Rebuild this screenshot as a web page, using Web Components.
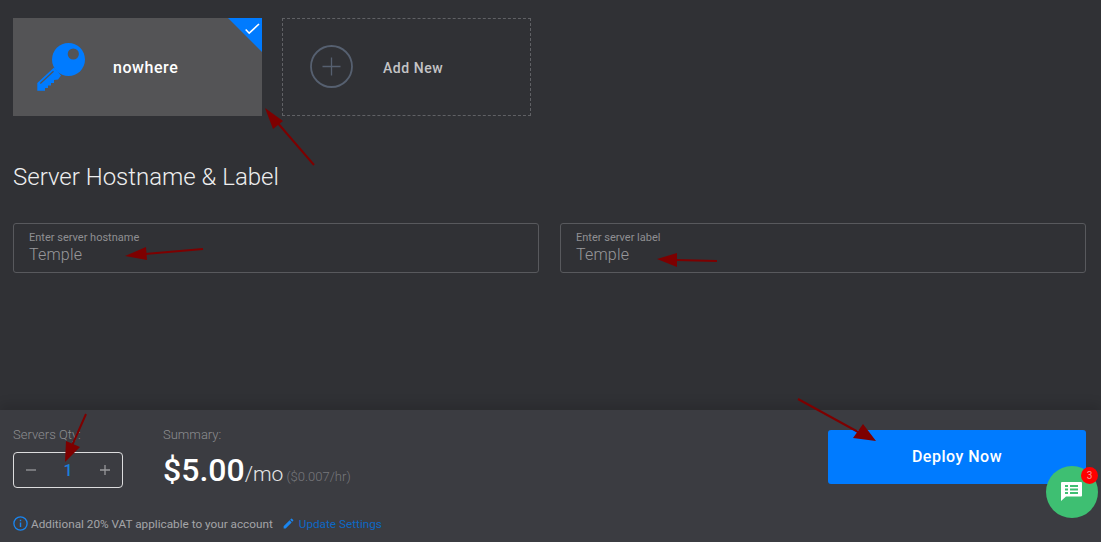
<!DOCTYPE html>
<html>
<head>
<meta charset="utf-8">
<title>Deploy</title>
<style>
  html, body { margin: 0; height: 100%; overflow: hidden; }
  body { font-family: Roboto, "Liberation Sans", sans-serif; background: #303135; }
</style>
</head>
<body>
<deploy-page></deploy-page>

<script>
class KeyCard extends HTMLElement {
  constructor() {
    super();
    this.attachShadow({ mode: 'open' });
    this.shadowRoot.innerHTML = `
    <style>
      :host { display: flex; align-items: center; width: 249px; height: 98px; background: #545456; position: relative; flex-shrink: 0; }
      svg.key { margin-left: 23px; width: 50px; height: 50px; flex-shrink: 0; }
      span { margin-left: 27px; font-size: 16px; font-weight: 500; letter-spacing: .55px; color: #fff; margin-top: 1px; }
      svg.corner { position: absolute; top: 0; right: 0; width: 34px; height: 34px; }
    </style>
    <svg class="key" viewBox="0 0 50 50">
      <circle cx="32.500" cy="17.500" r="16.500" fill="#007bff"/>
      <path fill="#007bff" d="M18 25.500L1.300 41v7.700H9V46h3v-2.500h3V41h3v-3l4-.5 3-4z"/>
      <path fill="none" stroke="#545456" stroke-width="1.300" d="M4.300 41.500L17.500 29.300"/>
      <circle cx="37.300" cy="12" r="5.600" fill="#545456"/>
    </svg>
    <span><slot></slot></span>
    <svg class="corner" viewBox="0 0 34 34">
      <path fill="#007bff" d="M0 0h34v34z"/>
      <path fill="none" stroke="#fff" stroke-width="1.600" d="M17.700 11.500l3.500 3.700 9.800-9.200"/>
    </svg>`;
  }
}
customElements.define('key-card', KeyCard);

class AddCard extends HTMLElement {
  constructor() {
    super();
    this.attachShadow({ mode: 'open' });
    this.shadowRoot.innerHTML = `
    <style>
      :host { display: flex; align-items: center; box-sizing: border-box; width: 249px; height: 98px; border: 1px dashed #606165; flex-shrink: 0; }
      svg { margin-left: 27px; width: 43px; height: 43px; flex-shrink: 0; margin-top: -1px; }
      span { margin-left: 30px; font-size: 14px; font-weight: 500; letter-spacing: .55px; color: #c4c4c6; margin-top: 1px; }
    </style>
    <svg viewBox="0 0 43 43" fill="none" stroke="#566070">
      <circle cx="21.500" cy="21.500" r="20.500" stroke-width="1.800"/>
      <path stroke-width="1.300" d="M12.500 21.500h18M21.500 12.500v18"/>
    </svg>
    <span><slot></slot></span>`;
  }
}
customElements.define('add-card', AddCard);

class TextField extends HTMLElement {
  constructor() {
    super();
    this.attachShadow({ mode: 'open' });
    this.shadowRoot.innerHTML = `
    <style>
      :host { display: flex; flex-direction: column; box-sizing: border-box; flex: 1; height: 50px; border: 1px solid #58595d; border-radius: 3px; padding: 7px 15px 0; }
      label { font-size: 11px; line-height: 13px; color: #8f8f92; }
      span { font-size: 16px; line-height: 19px; font-weight: 300; color: #98989b; letter-spacing: .2px; margin-top: 1px; }
    </style>
    <label></label>
    <span><slot></slot></span>`;
  }
  connectedCallback() {
    this.shadowRoot.querySelector('label').textContent = this.getAttribute('label');
  }
}
customElements.define('text-field', TextField);

class QtyStepper extends HTMLElement {
  constructor() {
    super();
    this.attachShadow({ mode: 'open' });
    this.shadowRoot.innerHTML = `
    <style>
      :host { display: flex; align-items: center; justify-content: space-between; box-sizing: border-box; width: 110px; height: 36px; border: 1px solid #dcdcdd; border-radius: 4px; padding: 0 12px; }
      svg { width: 10px; height: 10px; }
      span { font-size: 16px; font-weight: 500; color: #1a7fdc; }
    </style>
    <svg viewBox="0 0 10 10"><path stroke="#98989b" stroke-width="1.300" d="M0 5h10"/></svg>
    <span><slot></slot></span>
    <svg viewBox="0 0 10 10"><path stroke="#98989b" stroke-width="1.300" d="M0 5h10M5 0v10"/></svg>`;
  }
}
customElements.define('qty-stepper', QtyStepper);

class DeployBar extends HTMLElement {
  constructor() {
    super();
    this.attachShadow({ mode: 'open' });
    this.shadowRoot.innerHTML = `
    <style>
      :host { display: flex; flex-direction: column; box-sizing: border-box; height: 132px; background: #3b3c41; padding: 17px 15px 0 13px; box-shadow: 0 -6px 10px rgba(0,0,0,.12); position: relative; }
      .top { display: flex; align-items: flex-start; height: 85px; }
      .qty { width: 150px; }
      .cap { font-size: 13px; line-height: 15px; font-weight: 300; color: #8c8d90; margin-bottom: 10px; }
      .price { display: flex; align-items: baseline; color: #fff; margin-top: -1px; }
      .price b { font-size: 32px; line-height: 38px; font-weight: 500; }
      .price i { font-style: normal; font-size: 21px; font-weight: 300; color: #e6e6e7; }
      .price small { font-size: 13px; font-weight: 300; color: #77787c; margin-left: 3px; }
      button { margin-left: auto; width: 258px; height: 54px; margin-top: 3px; padding: 0 0 2px; background: #007bff; border: 0; border-radius: 3px; font: 500 16px Roboto, sans-serif; letter-spacing: .5px; color: #fff; }
      .note { display: flex; align-items: center; font-size: 11.750px; color: #a4a5a8; font-weight: 400; margin-top: 3px; height: 18px; }
      .note svg { flex-shrink: 0; }
      .info { width: 15px; height: 15px; margin-right: 3px; margin-top: -2px; }
      .pen { width: 13px; height: 13px; margin-left: 9px; margin-right: 4px; margin-top: -2px; }
      a { color: #0d68c4; text-decoration: none; margin-top: -1px; }
    </style>
    <div class="top">
      <div class="qty">
        <div class="cap">Servers Qty:</div>
        <qty-stepper>1</qty-stepper>
      </div>
      <div class="sum">
        <div class="cap">Summary:</div>
        <div class="price"><b>$5.00</b><i>/mo</i><small>($0.007/hr)</small></div>
      </div>
      <button>Deploy Now</button>
    </div>
    <div class="note">
      <svg class="info" viewBox="0 0 15 15" fill="none"><circle cx="7.500" cy="7.500" r="6.600" stroke="#1a86f0" stroke-width="1.300"/><path fill="#1a86f0" d="M6.800 6.500h1.400v4.500H6.800zM6.800 3.800h1.400v1.500H6.800z"/></svg>
      <span>Additional 20% VAT applicable to your account</span>
      <svg class="pen" viewBox="0 0 24 24"><path fill="#1a86f0" d="M3 17.250V21h3.750L17.810 9.940l-3.750-3.750L3 17.250zM20.710 7.040a1 1 0 0 0 0-1.410l-2.340-2.340a1 1 0 0 0-1.410 0l-1.830 1.830 3.750 3.750 1.830-1.830z"/></svg>
      <a href="#">Update Settings</a>
    </div>`;
  }
}
customElements.define('deploy-bar', DeployBar);

class ChatFab extends HTMLElement {
  constructor() {
    super();
    this.attachShadow({ mode: 'open' });
    this.shadowRoot.innerHTML = `
    <style>
      :host { position: absolute; left: 1046px; top: 466px; width: 52px; height: 52px; border-radius: 50%; background: #3ebf72; display: flex; align-items: center; justify-content: center; }
      svg { width: 21px; height: 19px; margin: 0 1px 1px 0; }
      b { position: absolute; top: 1px; right: 0; width: 17px; height: 17px; border-radius: 50%; background: #f00; color: #f79a9a; font: 400 10px/17px Roboto, sans-serif; text-align: center; }
    </style>
    <svg viewBox="0 0 21 19">
      <path fill="#fff" d="M1 0h19a1 1 0 0 1 1 1v12.500a1 1 0 0 1-1 1H5L0 19V1a1 1 0 0 1 1-1z"/>
      <path fill="#3ebf72" d="M4 3h3v2H4zM9 3h8v2H9zM4 6.500h3v2H4zM9 6.500h8v2H9zM4 10h3v2H4zM9 10h8v2H9z"/>
    </svg>
    <b><slot></slot></b>`;
  }
}
customElements.define('chat-fab', ChatFab);

class DeployPage extends HTMLElement {
  constructor() {
    super();
    this.attachShadow({ mode: 'open' });
    this.shadowRoot.innerHTML = `
    <style>
      :host { display: flex; flex-direction: column; height: 542px; position: relative; overflow: hidden; color: #fff; }
      main { flex: 1; box-sizing: border-box; padding: 18px 15px 0 13px; }
      .cards { display: flex; gap: 20px; }
      h2 { margin: 45px 0 30px; font-size: 24px; line-height: 32px; font-weight: 300; color: #eeeeef; }
      .fields { display: flex; gap: 21px; }
      svg.arrows { position: absolute; inset: 0; width: 1101px; height: 542px; pointer-events: none; }
    </style>
    <main>
      <div class="cards">
        <key-card>nowhere</key-card>
        <add-card>Add New</add-card>
      </div>
      <h2>Server Hostname &amp; Label</h2>
      <div class="fields">
        <text-field label="Enter server hostname">Temple</text-field>
        <text-field label="Enter server label">Temple</text-field>
      </div>
    </main>
    <deploy-bar></deploy-bar>
    <svg class="arrows" viewBox="0 0 1101 542" fill="#7d0000" stroke="#7d0000">
      <path fill="none" stroke-width="2" d="M314 165L276 121M203 249L145 254M717 261L676 260M86 414L71 448M798 399L860 433"/>
      <path stroke="none" d="M265 108L283 121L273 129zM125 256L146 247L147 260zM657 259L677 253L677 267zM65 462L66 441L80 447zM876 441L853 438L863 424z"/>
    </svg>
    <chat-fab>3</chat-fab>`;
  }
}
customElements.define('deploy-page', DeployPage);
</script>
</body>
</html>
